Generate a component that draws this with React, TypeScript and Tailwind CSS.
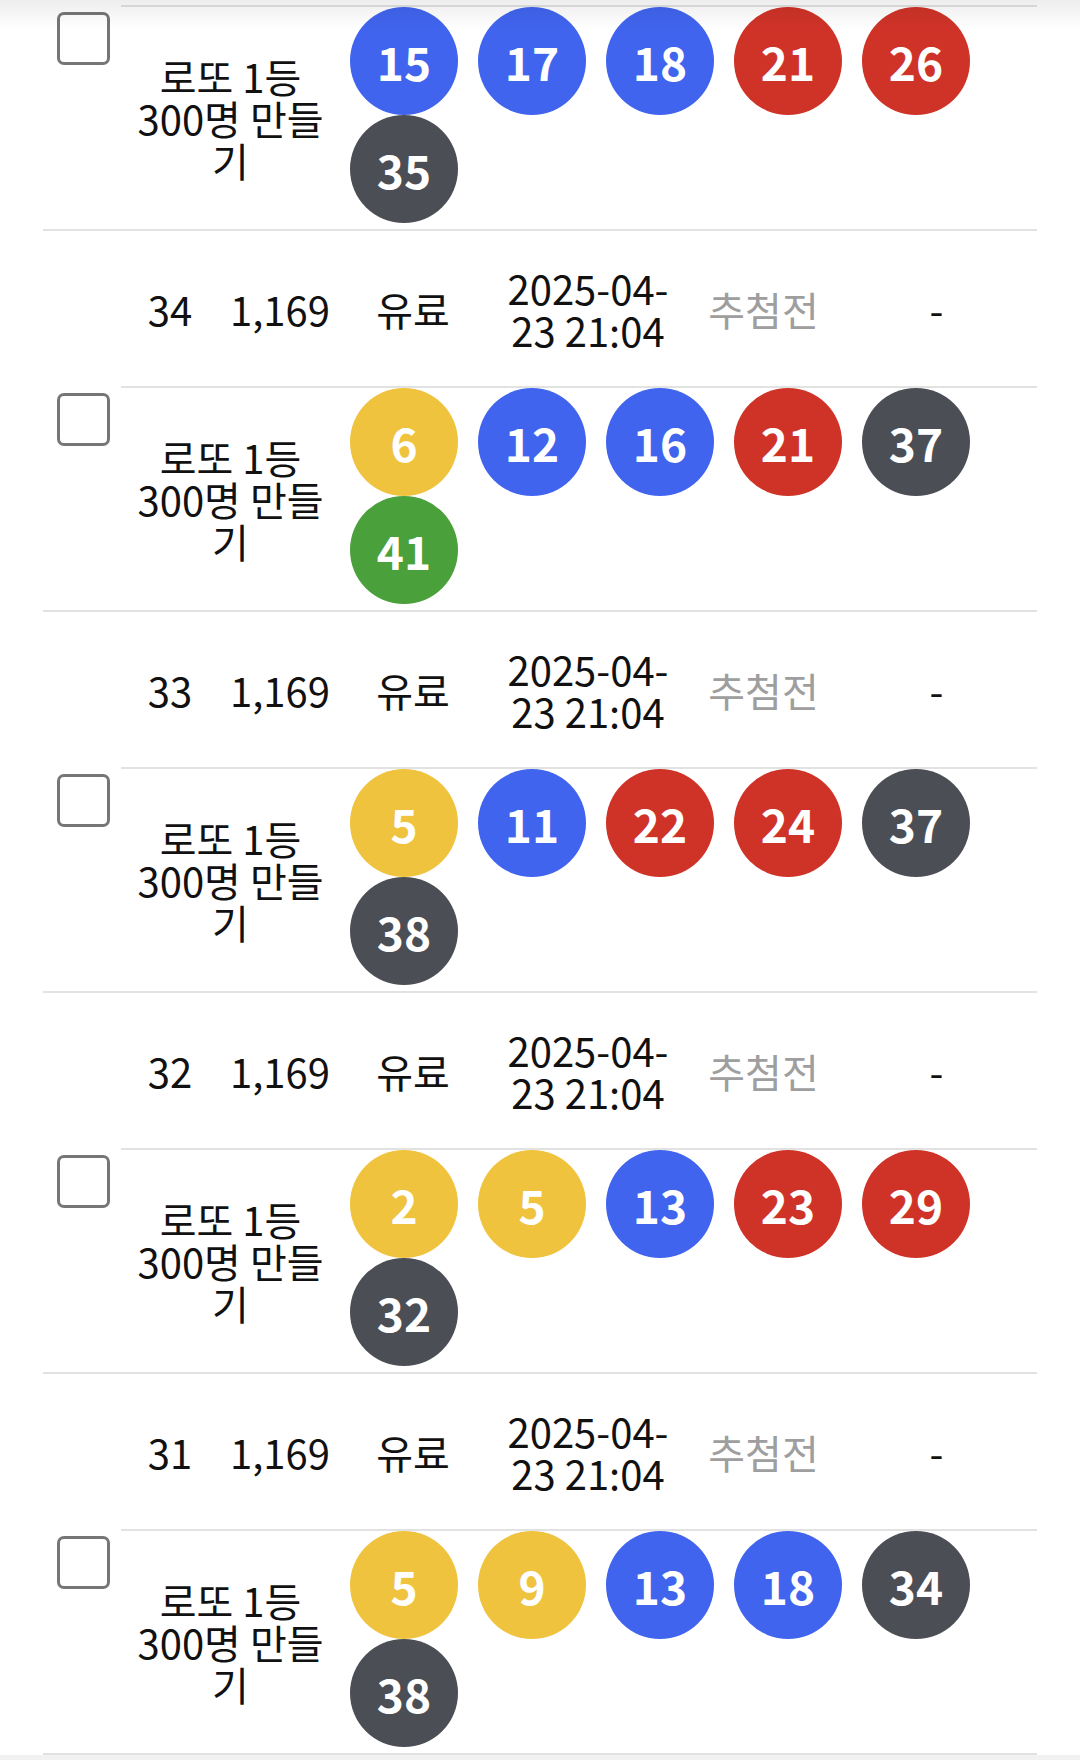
import React from "react";

type Entry = { id: number; balls: number[] };

const firstBalls = [15, 17, 18, 21, 26, 35];

const entries: Entry[] = [
  { id: 34, balls: [6, 12, 16, 21, 37, 41] },
  { id: 33, balls: [5, 11, 22, 24, 37, 38] },
  { id: 32, balls: [2, 5, 13, 23, 29, 32] },
  { id: 31, balls: [5, 9, 13, 18, 34, 38] },
];

function ballColor(n: number) {
  if (n <= 10) return "bg-[#f0c33f]";
  if (n <= 20) return "bg-[#4064ee]";
  if (n <= 30) return "bg-[#cf3328]";
  if (n <= 40) return "bg-[#4c4e56]";
  return "bg-[#4aa03a]";
}

function Ball({ n }: { n: number }) {
  return (
    <div
      className={`mx-[10px] flex h-[108px] w-[108px] items-center justify-center rounded-full text-[46px] font-bold leading-none text-white ${ballColor(n)}`}
    >
      {n}
    </div>
  );
}

function PickRow({ balls }: { balls: number[] }) {
  return (
    <div className="flex">
      <div className="w-[78px] shrink-0 pl-[14px] pt-[7px]">
        <div className="h-[53px] w-[53px] rounded-[7px] border-[3px] border-[#767676] bg-white" />
      </div>
      <div className="flex flex-1 border-t-2 border-[#e2e2e2]">
        <div className="flex w-[219px] shrink-0 items-center justify-center text-center text-[40px] leading-[42px] text-[#111]">
          <p>
            로또 1등
            <br />
            300명 만들
            <br />
            기
          </p>
        </div>
        <div className="flex flex-1 flex-wrap content-start pb-[6px]">
          {balls.map((b, i) => (
            <Ball key={i} n={b} />
          ))}
        </div>
      </div>
    </div>
  );
}

function InfoRow({ id }: { id: number }) {
  return (
    <div className="flex h-[157px] items-center border-t-2 border-[#e2e2e2] text-center text-[40px] leading-[42px] text-[#111]">
      <div className="w-[78px] shrink-0" />
      <div className="w-[98px] shrink-0">{id}</div>
      <div className="w-[122px] shrink-0">1,169</div>
      <div className="w-[144px] shrink-0">유료</div>
      <div className="w-[206px] shrink-0">
        2025-04-
        <br />
        23 21:04
      </div>
      <div className="w-[145px] shrink-0 text-[#9e9e9e]">추첨전</div>
      <div className="flex-1">-</div>
    </div>
  );
}

export default function App() {
  return (
    <div className="relative h-[1760px] overflow-hidden bg-white font-['Noto_Sans_CJK_KR','Noto_Sans',sans-serif]">
      <div className="pointer-events-none absolute inset-x-0 top-0 z-10 h-[30px] bg-gradient-to-b from-black/[0.07] to-transparent" />

      <div className="mx-[43px] pt-[5px]">
        <PickRow balls={firstBalls} />
        {entries.map((e) => (
          <div key={e.id}>
            <InfoRow id={e.id} />
            <PickRow balls={e.balls} />
          </div>
        ))}
        <div className="border-t-2 border-[#e2e2e2]" />
      </div>
      <div className="h-[10px] bg-[#f1f1f1]" />
    </div>
  );
}
